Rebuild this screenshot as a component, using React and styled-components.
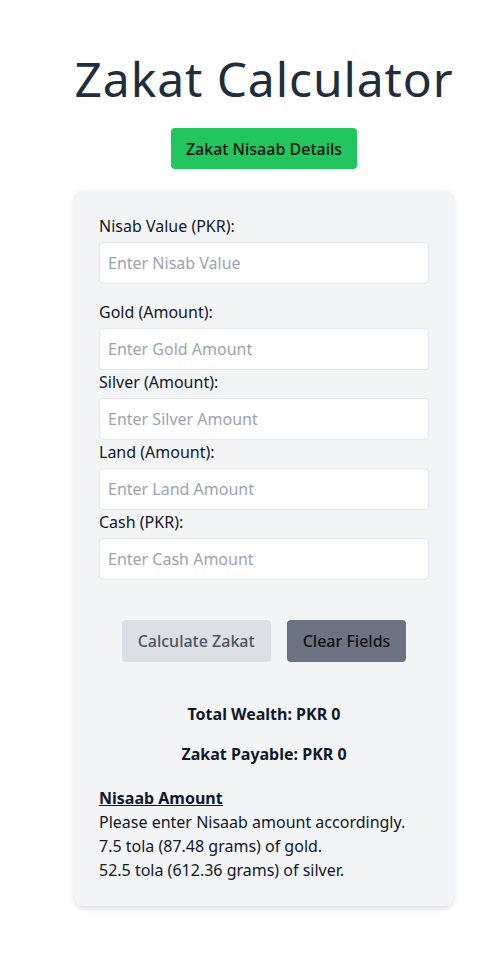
import React, { useState } from 'react';
import styled, { createGlobalStyle } from 'styled-components';

const GlobalStyle = createGlobalStyle`
  body {
    margin: 0;
    background: #ffffff;
    font-family: "Noto Sans", "Open Sans", sans-serif;
    color: #111827;
  }
  * { box-sizing: border-box; }
`;

const Page = styled.div`
  display: flex;
  flex-direction: column;
  align-items: center;
  padding: 55px 0 40px 48px;
`;

const Title = styled.h1`
  margin: 0;
  font-size: 48px;
  line-height: 48px;
  font-weight: 400;
  letter-spacing: 0.9px;
  color: #1f2d3d;
`;

const GreenButton = styled.button`
  margin-top: 25px;
  height: 41px;
  width: 186px;
  border: none;
  border-radius: 4px;
  background: #22c55e;
  color: #111;
  font-family: inherit;
  font-size: 16px;
  font-weight: 500;
`;

const Card = styled.div`
  margin-top: 22px;
  width: 378px;
  background: #f3f4f6;
  border-radius: 8px;
  box-shadow: 0 2px 6px rgba(0, 0, 0, 0.15);
  padding: 23px 24px 24px;
`;

const Field = styled.div`
  display: flex;
  flex-direction: column;
  margin-bottom: ${p => (p.$spaced ? '16px' : '0')};
`;

const Label = styled.label`
  font-size: 16px;
  line-height: 24px;
  height: 24px;
  margin-bottom: 4px;
`;

const Input = styled.input`
  height: 42px;
  width: 100%;
  border: 1px solid #e5e7eb;
  border-radius: 4px;
  background: #fff;
  padding: 0 8px;
  font-family: inherit;
  font-size: 16px;
  &::placeholder { color: #9ca3af; }
`;

const Actions = styled.div`
  display: flex;
  justify-content: center;
  gap: 16px;
  margin-top: 40px;
`;

const ActionButton = styled.button`
  height: 42px;
  padding: 0 16px;
  border: none;
  border-radius: 4px;
  font-family: inherit;
  font-size: 16px;
  font-weight: 500;
  background: ${p => (p.$dark ? '#6b7280' : '#dcdfe4')};
  color: ${p => (p.$dark ? '#111' : '#4b5563')};
`;

const Result = styled.p`
  margin: ${p => p.$first ? '40px 0 0' : '16px 0 0'};
  text-align: center;
  font-weight: 700;
  font-size: 16px;
  line-height: 24px;
`;

const Note = styled.div`
  margin-top: 20px;
  font-size: 16px;
  line-height: 24px;
`;

const NoteTitle = styled.div`
  font-weight: 700;
  text-decoration: underline;
`;

const fields = [
  { label: 'Nisab Value (PKR):', placeholder: 'Enter Nisab Value', spaced: true },
  { label: 'Gold (Amount):', placeholder: 'Enter Gold Amount' },
  { label: 'Silver (Amount):', placeholder: 'Enter Silver Amount' },
  { label: 'Land (Amount):', placeholder: 'Enter Land Amount' },
  { label: 'Cash (PKR):', placeholder: 'Enter Cash Amount' },
];

const App = () => {
  const [values, setValues] = useState({});

  return (
    <>
      <GlobalStyle />
      <Page>
        <Title>Zakat Calculator</Title>
        <GreenButton>Zakat Nisaab Details</GreenButton>
        <Card>
          {fields.map((f, i) => (
            <Field key={i} $spaced={f.spaced}>
              <Label>{f.label}</Label>
              <Input
                placeholder={f.placeholder}
                value={values[i] || ''}
                onChange={e => setValues({ ...values, [i]: e.target.value })}
              />
            </Field>
          ))}
          <Actions>
            <ActionButton>Calculate Zakat</ActionButton>
            <ActionButton $dark onClick={() => setValues({})}>Clear Fields</ActionButton>
          </Actions>
          <Result $first>Total Wealth: PKR 0</Result>
          <Result>Zakat Payable: PKR 0</Result>
          <Note>
            <NoteTitle>Nisaab Amount</NoteTitle>
            <div>Please enter Nisaab amount accordingly.</div>
            <div>7.5 tola (87.48 grams) of gold.</div>
            <div>52.5 tola (612.36 grams) of silver.</div>
          </Note>
        </Card>
      </Page>
    </>
  );
};

export default App;
